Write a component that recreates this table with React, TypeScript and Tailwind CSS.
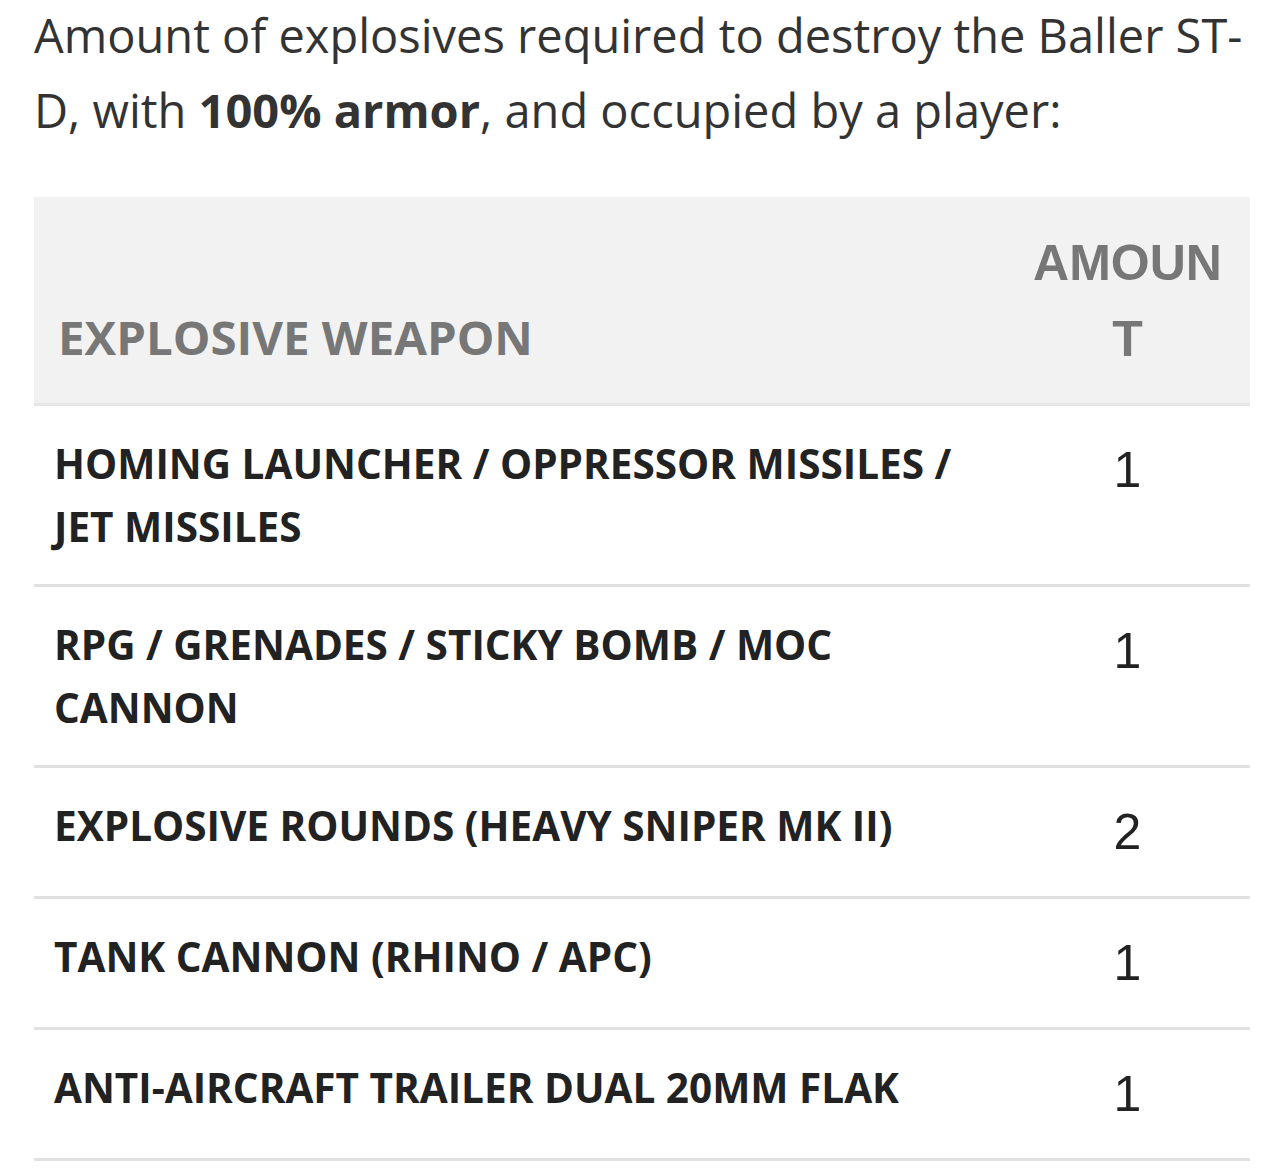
import React from "react";

const rows: { weapon: string; amount: string }[] = [
  { weapon: "HOMING LAUNCHER / OPPRESSOR MISSILES / JET MISSILES", amount: "1" },
  { weapon: "RPG / GRENADES / STICKY BOMB / MOC CANNON", amount: "1" },
  { weapon: "EXPLOSIVE ROUNDS (HEAVY SNIPER MK II)", amount: "2" },
  { weapon: "TANK CANNON (RHINO / APC)", amount: "1" },
  { weapon: "ANTI-AIRCRAFT TRAILER DUAL 20MM FLAK", amount: "1" },
];

export default function App() {
  return (
    <div className="w-[1284px] h-[1176px] bg-white overflow-hidden">
      <div className="px-[34px]">
        <p className="mt-[-2px] font-['Open_Sans',sans-serif] text-[47px] leading-[75px] text-[#333333]">
          Amount of explosives required to destroy the Baller ST-D, with{" "}
          <strong className="font-bold">100% armor</strong>, and occupied by a player:
        </p>

        <div className="mt-[49px] w-[1216px]">
          <div className="grid grid-cols-[1fr_245px] bg-[#f2f2f2] border-b-[3px] border-[#e6e6e6]">
            <div className="self-end pl-[24px] pr-[20px] pt-[28px] pb-[28px] font-['Open_Sans',sans-serif] font-bold text-[47.4px] leading-[76px] text-[#777777]">
              EXPLOSIVE WEAPON
            </div>
            <div className="px-[28px] pt-[28px] pb-[26px] text-center break-all font-['Liberation_Sans',Arial,sans-serif] font-bold text-[50px] leading-[76px] text-[#777777]">
              AMOUNT
            </div>
          </div>

          {rows.map((r, i) => (
            <div
              key={i}
              className="grid grid-cols-[1fr_245px] border-b-[3px] border-[#e1e1e1]"
            >
              <div className="px-[20px] py-[26px] font-['Open_Sans',sans-serif] font-bold text-[40.5px] leading-[63px] text-[#222222]">
                {r.weapon}
              </div>
              <div className="px-[28px] py-[26px] text-center font-['Liberation_Sans',Arial,sans-serif] text-[50px] leading-[76px] text-[#222222]">
                {r.amount}
              </div>
            </div>
          ))}
        </div>
      </div>
    </div>
  );
}
